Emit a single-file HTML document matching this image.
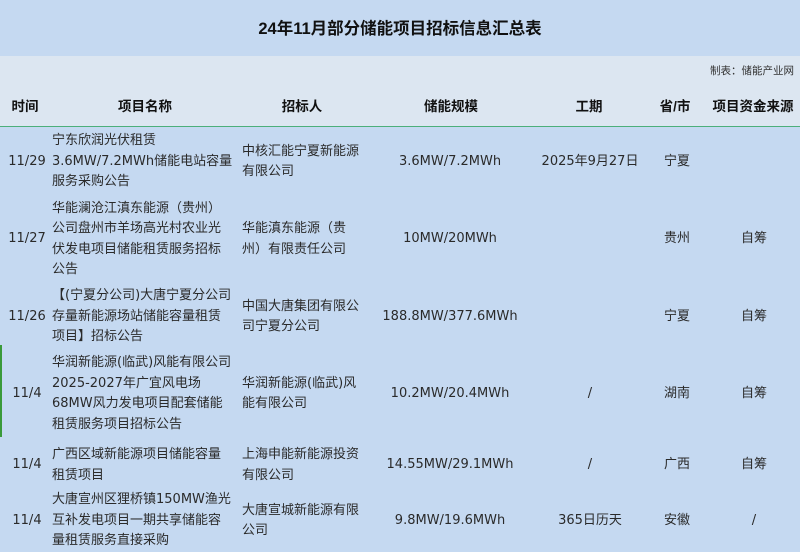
<!DOCTYPE html>
<html><head><meta charset="utf-8"><style>
*{margin:0;padding:0;box-sizing:border-box}
body{width:800px;height:547px;overflow:hidden;background:#c5d9f1;font-family:"DejaVu Sans","Noto Sans CJK SC",sans-serif;color:#2a2a2a;font-size:13px;position:relative}
.title{position:absolute;left:0;top:0;width:800px;height:56px;line-height:58px;text-align:center;font-weight:bold;font-size:16.5px;color:#111;font-family:"Liberation Sans","Noto Sans CJK SC",sans-serif}
.hdr{position:absolute;left:0;top:56px;width:800px;height:71px;background:#dce6f1;border-bottom:1px solid #4caf7a}
.src{position:absolute;right:6px;top:63px;font-size:10.5px;color:#333}
.h{position:absolute;top:95px;font-weight:bold;font-size:13.5px;color:#111;transform:translateX(-50%);white-space:nowrap;font-family:"Liberation Sans","Noto Sans CJK SC",sans-serif}
.row{position:absolute;left:0;width:800px;display:flex;align-items:center;margin-top:3px}
.row>div{position:absolute;white-space:nowrap;line-height:20.5px}
.t{left:0;width:54px;text-align:center}
.n{left:52px}
.b{left:242px}
.c{transform:translateX(-50%);text-align:center}
.green{position:absolute;left:0;top:345px;width:2px;height:92px;background:#3a9a3a}
</style></head><body>
<div class="title">24年11月部分储能项目招标信息汇总表</div>
<div class="hdr"></div>
<div class="src">制表：储能产业网</div>
<div class="h" style="left:25px">时间</div>
<div class="h" style="left:145px">项目名称</div>
<div class="h" style="left:302px">招标人</div>
<div class="h" style="left:451px">储能规模</div>
<div class="h" style="left:589px">工期</div>
<div class="h" style="left:675px">省/市</div>
<div class="h" style="left:753px">项目资金来源</div>
<div class="green"></div>

<div class="row" style="top:128px;height:62px">
<div class="t">11/29</div>
<div class="n">宁东欣润光伏租赁<br>3.6MW/7.2MWh储能电站容量<br>服务采购公告</div>
<div class="b">中核汇能宁夏新能源<br>有限公司</div>
<div class="c" style="left:450px">3.6MW/7.2MWh</div>
<div class="c" style="left:590px">2025年9月27日</div>
<div class="c" style="left:677px">宁夏</div>
</div>

<div class="row" style="top:190px;height:93px">
<div class="t">11/27</div>
<div class="n">华能澜沧江滇东能源（贵州）<br>公司盘州市羊场高光村农业光<br>伏发电项目储能租赁服务招标<br>公告</div>
<div class="b">华能滇东能源（贵<br>州）有限责任公司</div>
<div class="c" style="left:450px">10MW/20MWh</div>
<div class="c" style="left:677px">贵州</div>
<div class="c" style="left:754px">自筹</div>
</div>

<div class="row" style="top:283px;height:62px">
<div class="t">11/26</div>
<div class="n">【(宁夏分公司)大唐宁夏分公司<br>存量新能源场站储能容量租赁<br>项目】招标公告</div>
<div class="b">中国大唐集团有限公<br>司宁夏分公司</div>
<div class="c" style="left:450px">188.8MW/377.6MWh</div>
<div class="c" style="left:677px">宁夏</div>
<div class="c" style="left:754px">自筹</div>
</div>

<div class="row" style="top:345px;height:92px">
<div class="t">11/4</div>
<div class="n">华润新能源(临武)风能有限公司<br>2025-2027年广宜风电场<br>68MW风力发电项目配套储能<br>租赁服务项目招标公告</div>
<div class="b">华润新能源(临武)风<br>能有限公司</div>
<div class="c" style="left:450px">10.2MW/20.4MWh</div>
<div class="c" style="left:590px">/</div>
<div class="c" style="left:677px">湖南</div>
<div class="c" style="left:754px">自筹</div>
</div>

<div class="row" style="top:437px;height:51px">
<div class="t">11/4</div>
<div class="n">广西区域新能源项目储能容量<br>租赁项目</div>
<div class="b">上海申能新能源投资<br>有限公司</div>
<div class="c" style="left:450px">14.55MW/29.1MWh</div>
<div class="c" style="left:590px">/</div>
<div class="c" style="left:677px">广西</div>
<div class="c" style="left:754px">自筹</div>
</div>

<div class="row" style="top:487px;height:62px">
<div class="t">11/4</div>
<div class="n">大唐宣州区狸桥镇150MW渔光<br>互补发电项目一期共享储能容<br>量租赁服务直接采购</div>
<div class="b">大唐宣城新能源有限<br>公司</div>
<div class="c" style="left:450px">9.8MW/19.6MWh</div>
<div class="c" style="left:590px">365日历天</div>
<div class="c" style="left:677px">安徽</div>
<div class="c" style="left:754px">/</div>
</div>
</body></html>
